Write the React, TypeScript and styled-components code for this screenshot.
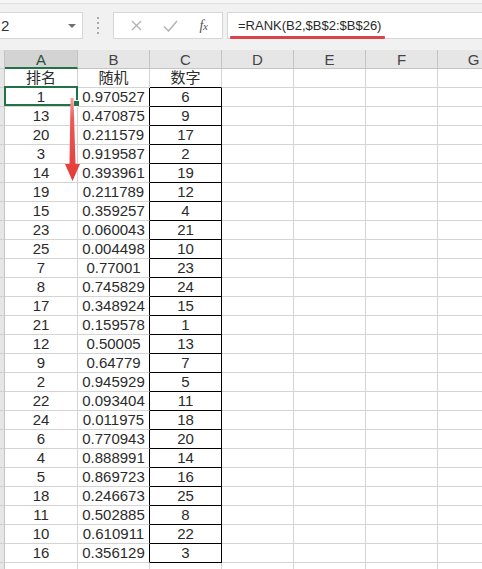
import React from "react";
import styled, { createGlobalStyle } from "styled-components";

const Global = createGlobalStyle`
  html, body { margin: 0; padding: 0; background: #fff; overflow: hidden; }
  body { width: 482px; height: 569px; }
  * { box-sizing: border-box; }
`;

const Page = styled.div`
  position: relative;
  width: 482px;
  height: 569px;
  overflow: hidden;
  font-family: "Liberation Sans", "Noto Sans CJK SC", sans-serif;
`;

const Toolbar = styled.div`
  display: flex;
  align-items: center;
  height: 50px;
  padding: 12px 0 11px 0;
  background: linear-gradient(#f6f6f6 0 3px, #dedede 3px 4px, #f1f1f1 4px);
`;

const Box = styled.div`
  position: relative;
  height: 27px;
  background: #fff;
  border: 1px solid #d6d6d6;
  display: flex;
  align-items: center;
`;

const NameBox = styled(Box)`
  margin-left: -13px;
  width: 96px;
  padding-left: 13px;
  font-size: 15px;
  color: #333;
`;

const Caret = styled.span`
  position: absolute;
  right: 6px;
  top: 11px;
  width: 0;
  height: 0;
  border-left: 4px solid transparent;
  border-right: 4px solid transparent;
  border-top: 4px solid #707070;
`;

const Grip = styled.div`
  width: 30px;
  height: 27px;
  display: flex;
  flex-direction: column;
  align-items: center;
  justify-content: center;
  gap: 3px;
  span {
    width: 2px;
    height: 2px;
    background: #a8a8a8;
  }
`;

const FxBox = styled(Box)`
  width: 110px;
  justify-content: space-around;
  padding: 0 4px 0 6px;
`;

const Fx = styled.span`
  font-family: "Liberation Serif", serif;
  font-style: italic;
  font-size: 14px;
  color: #555;
  letter-spacing: -0.5px;
  sub {
    font-size: 11px;
    vertical-align: baseline;
  }
`;

const FormulaBox = styled(Box)`
  flex: 1;
  margin-left: 4px;
  margin-right: -5px;
  padding-left: 10px;
  font-size: 13px;
  color: #2a2a2a;
`;

const Underline = styled.span`
  position: absolute;
  left: 2px;
  bottom: -1px;
  width: 155px;
  height: 3px;
  border-radius: 1px;
  background: #d9434c;
`;

const Sheet = styled.div`
  display: grid;
  grid-template-columns: 5px 73px repeat(6, 72px);
  grid-auto-rows: 19px;
`;

const ColHead = styled.div<{ $sel?: boolean }>`
  background: ${(p) => (p.$sel ? "#d3d3d3" : "#e6e6e6")};
  border-right: 1px solid #c4c4c4;
  border-bottom: ${(p) => (p.$sel ? "2px solid #217346" : "1px solid #c4c4c4")};
  color: ${(p) => (p.$sel ? "#2e4f3b" : "#444")};
  font-size: 15px;
  display: flex;
  justify-content: center;
  align-items: center;
  padding-top: ${(p) => (p.$sel ? "2px" : "1px")};
`;

const RowHead = styled.div`
  background: #e6e6e6;
  border-right: 1px solid #c4c4c4;
  border-bottom: 1px solid #cfcfcf;
`;

const Cell = styled.div<{ $boxed?: boolean; $edge?: boolean; $topEdge?: boolean }>`
  position: relative;
  border-right: 1px solid ${(p) => (p.$boxed || p.$edge ? "#000" : "#d4d4d4")};
  border-bottom: 1px solid ${(p) => (p.$boxed || p.$topEdge ? "#000" : "#d4d4d4")};
  font-size: 15px;
  color: #2b2b2b;
  display: flex;
  justify-content: center;
  align-items: flex-end;
  line-height: 16px;
  padding-bottom: 1px;
  white-space: nowrap;
`;

const Selection = styled.span`
  position: absolute;
  left: -1px;
  top: -2px;
  right: -1px;
  bottom: 0;
  border: 2px solid #217346;
  pointer-events: none;
`;

const Handle = styled.span`
  position: absolute;
  right: -4px;
  bottom: -3px;
  width: 7px;
  height: 7px;
  background: #217346;
  border: 1px solid #fff;
`;

const Arrow = styled.svg`
  position: absolute;
  left: 60px;
  top: 95px;
  overflow: visible;
`;

const A = [1, 13, 20, 3, 14, 19, 15, 23, 25, 7, 8, 17, 21, 12, 9, 2, 22, 24, 6, 4, 5, 18, 11, 10, 16];
const B = [
  "0.970527", "0.470875", "0.211579", "0.919587", "0.393961", "0.211789", "0.359257",
  "0.060043", "0.004498", "0.77001", "0.745829", "0.348924", "0.159578", "0.50005",
  "0.64779", "0.945929", "0.093404", "0.011975", "0.770943", "0.888991", "0.869723",
  "0.246673", "0.502885", "0.610911", "0.356129",
];
const C = [6, 9, 17, 2, 19, 12, 4, 21, 10, 23, 24, 15, 1, 13, 7, 5, 11, 18, 20, 14, 16, 25, 8, 22, 3];

const cols = ["A", "B", "C", "D", "E", "F", "G"];

export default function App() {
  const rows: React.ReactNode[] = [];
  rows.push(
    <React.Fragment key="r1">
      <RowHead />
      <Cell>排名</Cell>
      <Cell>随机</Cell>
      <Cell $topEdge>数字</Cell>
      <Cell />
      <Cell />
      <Cell />
      <Cell />
    </React.Fragment>
  );
  for (let i = 0; i < 26; i++) {
    const has = i < 25;
    rows.push(
      <React.Fragment key={"r" + i}>
        <RowHead />
        <Cell>
          {has ? A[i] : ""}
          {i === 0 && (
            <Selection>
              <Handle />
            </Selection>
          )}
        </Cell>
        <Cell $edge={has}>{has ? B[i] : ""}</Cell>
        <Cell $boxed={has}>{has ? C[i] : ""}</Cell>
        <Cell />
        <Cell />
        <Cell />
        <Cell />
      </React.Fragment>
    );
  }

  return (
    <Page>
      <Global />
      <Toolbar>
        <NameBox>
          2
          <Caret />
        </NameBox>
        <Grip>
          <span />
          <span />
          <span />
          <span />
        </Grip>
        <FxBox>
          <svg width="11" height="11" viewBox="0 0 11 11">
            <path d="M1 1 L10 10 M10 1 L1 10" stroke="#b4b4b4" strokeWidth="1.4" fill="none" />
          </svg>
          <svg width="15" height="12" viewBox="0 0 15 12">
            <path d="M1 6.5 L5.5 11 L14 1" stroke="#b4b4b4" strokeWidth="1.5" fill="none" />
          </svg>
          <Fx>
            f<sub>x</sub>
          </Fx>
        </FxBox>
        <FormulaBox>
          =RANK(B2,$B$2:$B$26)
          <Underline />
        </FormulaBox>
      </Toolbar>
      <Sheet>
        <RowHead />
        {cols.map((c) => (
          <ColHead key={c} $sel={c === "A"}>
            {c}
          </ColHead>
        ))}
        {rows}
      </Sheet>
      <Arrow width="25" height="90" viewBox="0 0 25 90">
        <defs>
          <linearGradient id="ag" x1="0" y1="0" x2="0" y2="1">
            <stop offset="0" stopColor="#f4a0a0" />
            <stop offset="0.25" stopColor="#ec5a58" />
            <stop offset="1" stopColor="#e53935" />
          </linearGradient>
        </defs>
        <polygon
          points="10.5,3 13.5,3 15.5,69 20,69 12.5,86 5,69 9.5,69"
          fill="url(#ag)"
        />
      </Arrow>
    </Page>
  );
}
